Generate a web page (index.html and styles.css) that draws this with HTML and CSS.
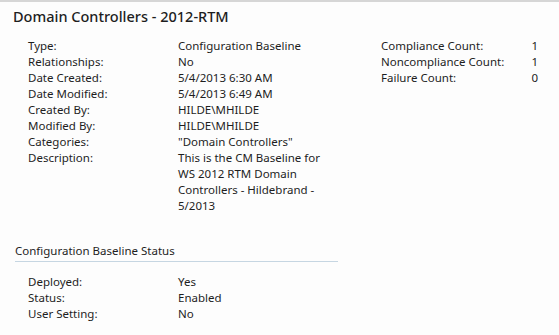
FILE: index.html
```html
<!DOCTYPE html>
<html lang="en">
<head>
    <meta charset="UTF-8">
    <title>Domain Controllers - 2012-RTM</title>
    <link rel="stylesheet" href="styles.css">
</head>
<body>
    <div class="pane">
        <h1 class="title">Domain Controllers - 2012-RTM</h1>
        <div class="summary">
            <dl class="props">
                <dt>Type:</dt><dd>Configuration Baseline</dd>
                <dt>Relationships:</dt><dd>No</dd>
                <dt>Date Created:</dt><dd>5/4/2013 6:30 AM</dd>
                <dt>Date Modified:</dt><dd>5/4/2013 6:49 AM</dd>
                <dt>Created By:</dt><dd>HILDE\MHILDE</dd>
                <dt>Modified By:</dt><dd>HILDE\MHILDE</dd>
                <dt>Categories:</dt><dd>"Domain Controllers"</dd>
                <dt>Description:</dt><dd>This is the CM Baseline for<br>WS 2012 RTM Domain<br>Controllers - Hildebrand -<br>5/2013</dd>
            </dl>
            <dl class="counts">
                <dt>Compliance Count:</dt><dd>1</dd>
                <dt>Noncompliance Count:</dt><dd>1</dd>
                <dt>Failure Count:</dt><dd>0</dd>
            </dl>
        </div>
        <h2 class="section">Configuration Baseline Status</h2>
        <dl class="props">
            <dt>Deployed:</dt><dd>Yes</dd>
            <dt>Status:</dt><dd>Enabled</dd>
            <dt>User Setting:</dt><dd>No</dd>
        </dl>
    </div>
</body>
</html>
```

FILE: styles.css
```css
body {
    margin: 0;
    padding: 0;
    background-color: #fdfdfd;
    font-family: "Noto Sans", sans-serif;
    font-size: 11.5px;
    color: #1e1e1e;
}

.pane {
    height: 335px;
    box-sizing: border-box;
    border-top: 2px solid #d6d6d6;
    padding: 4px 0 0 13px;
}

.title {
    font-size: 14.5px;
    font-weight: 500;
    margin: 0;
    line-height: 20px;
}

.summary {
    display: flex;
    align-items: flex-start;
    margin-top: 12px;
}

dl {
    margin: 0;
    display: grid;
    line-height: 16px;
}

dt, dd {
    margin: 0;
}

.props {
    grid-template-columns: 150px 203px;
    padding-left: 15px;
}

.counts {
    grid-template-columns: 149px 8px;
}

.counts dd {
    text-align: right;
}

.section {
    font-size: 11.5px;
    font-weight: normal;
    margin: 29px 0 12px 2px;
    width: 323px;
    line-height: 16px;
    padding-bottom: 2px;
    border-bottom: 1px solid #c6d6e2;
}
```
